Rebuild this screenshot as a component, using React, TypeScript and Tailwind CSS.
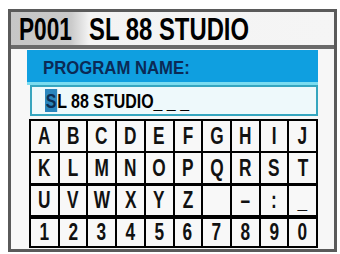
import React from "react";

const rows: { keys: string[]; h: string; mt: string }[] = [
  { keys: ["A", "B", "C", "D", "E", "F", "G", "H", "I", "J"], h: "h-[30px]", mt: "mt-0" },
  { keys: ["K", "L", "M", "N", "O", "P", "Q", "R", "S", "T"], h: "h-[30px]", mt: "mt-[2px]" },
  { keys: ["U", "V", "W", "X", "Y", "Z", "", "–", ":", "_"], h: "h-[29px]", mt: "mt-[3px]" },
  { keys: ["1", "2", "3", "4", "5", "6", "7", "8", "9", "0"], h: "h-[27px]", mt: "mt-[4px]" },
];

export default function App() {
  return (
    <div className="w-[340px] h-[254px] bg-white pl-[8px] pt-[9px] font-['Liberation_Sans',Arial,sans-serif] font-bold">
      <div className="w-[329px] h-[243px] border-[3px] border-[#5a5a5a] flex flex-col bg-[#f7f7f7]">
        <div className="h-[33px] shrink-0 flex items-center bg-[linear-gradient(to_right,#c6c6c6_0px,#cacaca_60px,#f3f3f3_78px,#f5f5f5_100%)] pl-[8px] text-[31px] leading-none text-black">
          <div className="w-[70px] whitespace-nowrap">
            <span className="inline-block origin-left scale-x-[0.73] mt-[2px]">P001</span>
          </div>
          <div className="whitespace-nowrap">
            <span className="inline-block origin-left scale-x-[0.77] mt-[2px]">SL 88 STUDIO</span>
          </div>
        </div>
        <div className="h-[4px] shrink-0 bg-[#6a6a6a]" />
        <div className="flex flex-col pl-[16px] pr-[16px] pt-[1px]">
          <div className="h-[32px] bg-[#0f9fe0] flex items-center pl-[16px] text-[19px] leading-none text-[#0b2a55] whitespace-nowrap">
            <span className="inline-block origin-left scale-x-[0.88] mt-[3px]">PROGRAM NAME:</span>
          </div>
          <div className="h-[3px] bg-[#7adcf0]" />
          <div className="ml-[3px] h-[31px] border-2 border-[#35a6bf] bg-[#eef9fb] flex items-center pl-[13px] text-[21px] leading-none text-black whitespace-nowrap">
            <span className="inline-block origin-left scale-x-[0.76]">
              <span className="bg-[#2a86bd] text-[#0a2e52] px-[1px]">S</span>
              <span>L 88 STUDIO_ _ _</span>
            </span>
          </div>
          <div className="ml-[2px] mt-[3px] bg-black p-[2px] flex flex-col">
            {rows.map((r, ri) => (
              <div key={ri} className={`grid grid-cols-10 gap-[2px] ${r.h} ${r.mt}`}>
                {r.keys.map((k, ki) => (
                  <div
                    key={ki}
                    className="bg-[#f8f8f8] flex items-center justify-center text-[23px] leading-none text-[#111]"
                  >
                    <span className="inline-block scale-x-[0.75]">{k}</span>
                  </div>
                ))}
              </div>
            ))}
          </div>
        </div>
      </div>
    </div>
  );
}
